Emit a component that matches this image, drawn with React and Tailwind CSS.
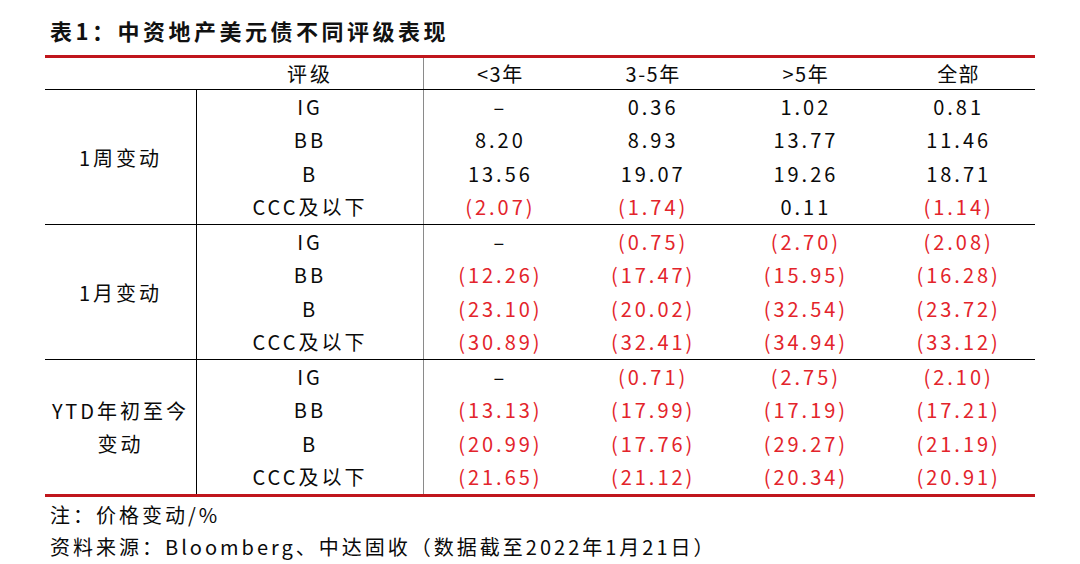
import React from "react";

const groups = [
  {
    label: ["1周变动"],
    rows: [
      ["IG", "–", "0.36", "1.02", "0.81"],
      ["BB", "8.20", "8.93", "13.77", "11.46"],
      ["B", "13.56", "19.07", "19.26", "18.71"],
      ["CCC及以下", "(2.07)", "(1.74)", "0.11", "(1.14)"],
    ],
  },
  {
    label: ["1月变动"],
    rows: [
      ["IG", "–", "(0.75)", "(2.70)", "(2.08)"],
      ["BB", "(12.26)", "(17.47)", "(15.95)", "(16.28)"],
      ["B", "(23.10)", "(20.02)", "(32.54)", "(23.72)"],
      ["CCC及以下", "(30.89)", "(32.41)", "(34.94)", "(33.12)"],
    ],
  },
  {
    label: ["YTD年初至今", "变动"],
    rows: [
      ["IG", "–", "(0.71)", "(2.75)", "(2.10)"],
      ["BB", "(13.13)", "(17.99)", "(17.19)", "(17.21)"],
      ["B", "(20.99)", "(17.76)", "(29.27)", "(21.19)"],
      ["CCC及以下", "(21.65)", "(21.12)", "(20.34)", "(20.91)"],
    ],
  },
];

const font = { fontFamily: '"Noto Sans CJK SC", "Noto Sans", sans-serif' };

function Cell({ v }) {
  const neg = v.startsWith("(");
  return (
    <div
      className={
        "flex-1 flex items-center justify-center text-[20px] tracking-[3px] " +
        (neg ? "text-[#e3242b]" : "text-[#0a0a0a]")
      }
    >
      {v}
    </div>
  );
}

export default function App() {
  return (
    <div className="w-[1080px] h-[564px] bg-white overflow-hidden" style={font}>
      <div className="pt-[15px] pl-[50px] h-[55px] text-[22px] leading-[30px] font-semibold tracking-[3.5px] text-[#111]">
        表1：中资地产美元债不同评级表现
      </div>
      <div className="ml-[45px] w-[990px] border-t-[3px] border-b-[3px] border-[#c0161c]">
        {/* header */}
        <div className="flex h-[32px] border-b border-black">
          <div className="w-[152px]" />
          <div className="w-[227px] flex items-center justify-center text-[20px] tracking-[3px] text-[#0a0a0a] border-r border-[#8a8a8a]">
            评级
          </div>
          {["<3年", "3-5年", ">5年", "全部"].map((h) => (
            <div
              key={h}
              className="flex-1 flex items-center justify-center text-[20px] tracking-[1.5px] text-[#0a0a0a]"
            >
              {h}
            </div>
          ))}
        </div>
        {groups.map((g, gi) => (
          <div
            key={gi}
            className={
              "flex " + (gi < groups.length - 1 ? "border-b border-black" : "")
            }
          >
            <div className="w-[152px] flex flex-col items-center justify-center border-r border-black text-[20px] tracking-[3px] leading-[33px] text-[#0a0a0a]">
              {g.label.map((l) => (
                <div key={l}>{l}</div>
              ))}
            </div>
            <div className="w-[227px] flex flex-col border-r border-[#8a8a8a]">
              {g.rows.map((r) => (
                <div
                  key={r[0]}
                  className="h-[33.5px] flex items-center justify-center text-[20px] tracking-[3px] text-[#0a0a0a]"
                >
                  {r[0]}
                </div>
              ))}
            </div>
            <div className="flex-1 flex flex-col">
              {g.rows.map((r) => (
                <div key={r[0]} className="h-[33.5px] flex">
                  {r.slice(1).map((v, i) => (
                    <Cell key={i} v={v} />
                  ))}
                </div>
              ))}
            </div>
          </div>
        ))}
      </div>
      <div className="pl-[50px] pt-[2px] text-[20px] leading-[32px] tracking-[3px] text-[#0a0a0a]">
        <div>注：价格变动/%</div>
        <div>资料来源：Bloomberg、中达固收（数据截至2022年1月21日）</div>
      </div>
    </div>
  );
}
